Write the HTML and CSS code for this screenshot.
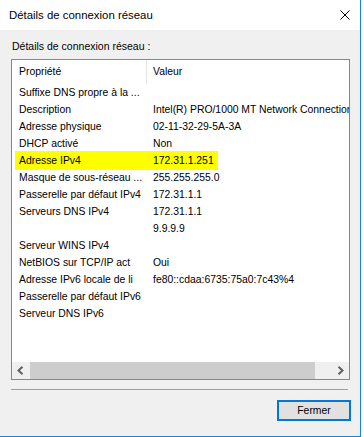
FILE: index.html
```html
<!DOCTYPE html>
<html lang="fr">
<head>
  <meta charset="UTF-8" />
  <meta name="viewport" content="width=device-width, initial-scale=1" />
  <title>Détails de connexion réseau</title>
  <link rel="stylesheet" href="styles.css">
</head>
<body>

  <div class="window">
    <div class="titlebar">
      <span class="title">Détails de connexion réseau</span>
      <svg class="close" width="10" height="10" viewBox="0 0 10 10">
        <path d="M0.5 0.5L9.5 9.5M9.5 0.5L0.5 9.5" stroke="#000" stroke-width="1" fill="none"/>
      </svg>
    </div>

    <div class="content">
      <div class="group-label">Détails de connexion réseau :</div>

      <!-- liste des propriétés -->
      <div class="listview">
        <div class="lv-header">
          <div class="col-name">Propriété</div>
          <div class="col-value">Valeur</div>
        </div>

        <div class="lv-body">
          <div class="row"><div class="col-name">Suffixe DNS propre à la ...</div><div class="col-value"></div></div>
          <div class="row"><div class="col-name">Description</div><div class="col-value">Intel(R) PRO/1000 MT Network Connection</div></div>
          <div class="row"><div class="col-name">Adresse physique</div><div class="col-value">02-11-32-29-5A-3A</div></div>
          <div class="row"><div class="col-name">DHCP activé</div><div class="col-value">Non</div></div>
          <div class="row marked"><div class="col-name">Adresse IPv4</div><div class="col-value">172.31.1.251</div></div>
          <div class="row"><div class="col-name">Masque de sous-réseau ...</div><div class="col-value">255.255.255.0</div></div>
          <div class="row"><div class="col-name">Passerelle par défaut IPv4</div><div class="col-value">172.31.1.1</div></div>
          <div class="row"><div class="col-name">Serveurs DNS IPv4</div><div class="col-value">172.31.1.1</div></div>
          <div class="row"><div class="col-name"></div><div class="col-value">9.9.9.9</div></div>
          <div class="row"><div class="col-name">Serveur WINS IPv4</div><div class="col-value"></div></div>
          <div class="row"><div class="col-name">NetBIOS sur TCP/IP act</div><div class="col-value">Oui</div></div>
          <div class="row"><div class="col-name">Adresse IPv6 locale de li</div><div class="col-value">fe80::cdaa:6735:75a0:7c43%4</div></div>
          <div class="row"><div class="col-name">Passerelle par défaut IPv6</div><div class="col-value"></div></div>
          <div class="row"><div class="col-name">Serveur DNS IPv6</div><div class="col-value"></div></div>
        </div>

        <div class="hscroll">
          <div class="sb-arrow">
            <svg width="7" height="9" viewBox="0 0 7 9"><path d="M5.5 0.8L1.5 4.5L5.5 8.2" stroke="#606060" stroke-width="2" fill="none"/></svg>
          </div>
          <div class="sb-track"><div class="sb-thumb"></div></div>
          <div class="sb-arrow">
            <svg width="7" height="9" viewBox="0 0 7 9"><path d="M1.5 0.8L5.5 4.5L1.5 8.2" stroke="#606060" stroke-width="2" fill="none"/></svg>
          </div>
        </div>
      </div>

      <div class="separator"></div>

      <div class="actions">
        <button class="btn">Fermer</button>
      </div>
    </div>
  </div>

</body>
</html>
```

FILE: styles.css
```css
* {
  box-sizing: border-box;
  margin: 0;
  padding: 0;
}

body {
  font-family: "Liberation Sans", Arial, sans-serif;
  font-size: 10.4px;
  color: #000;
  background: #fff;
}

.window {
  width: 361px;
  height: 437px;
  display: flex;
  flex-direction: column;
  background: #f0f0f0;
  border-right: 1px solid #1883d7;
  border-bottom: 1px solid #1883d7;
}

.titlebar {
  height: 30px;
  background: #fff;
  display: flex;
  align-items: center;
  padding-left: 9px;
}

.title {
  font-size: 11.4px;
}

.close {
  margin-left: auto;
  margin-right: 10px;
}

.content {
  flex: 1;
  padding: 8px 9px 0 11px;
}

.group-label {
  height: 16px;
  line-height: 16px;
  padding-left: 1px;
  margin-bottom: 5px;
  font-size: 10.5px;
}

.listview {
  width: 339px;
  height: 321px;
  border: 1px solid #828790;
  background: #fff;
  display: flex;
  flex-direction: column;
  overflow: hidden;
}

.lv-header {
  height: 24px;
  line-height: 24px;
  display: flex;
}

.lv-header .col-name {
  border-right: 1px solid #e5e5e5;
}

.col-name {
  width: 135px;
  flex-shrink: 0;
  padding-left: 7px;
  white-space: nowrap;
  overflow: hidden;
}

.col-value {
  flex: 1;
  padding-left: 6px;
  white-space: nowrap;
  overflow: hidden;
}

.lv-body {
  flex: 1;
}

.row {
  height: 17px;
  line-height: 17px;
  display: flex;
}

/* surlignage au feutre */
.row.marked {
  position: relative;
}

.row.marked::before {
  content: "";
  position: absolute;
  left: 3px;
  top: -1px;
  width: 203px;
  height: 19px;
  background: #ffff00;
}

.row.marked .col-name,
.row.marked .col-value {
  position: relative;
}

.hscroll {
  height: 17px;
  display: flex;
  background: #f0f0f0;
}

.sb-arrow {
  width: 17px;
  display: flex;
  align-items: center;
  justify-content: center;
}

.sb-track {
  flex: 1;
  padding-left: 1px;
}

.sb-thumb {
  width: 285px;
  height: 100%;
  background: #cdcdcd;
}

.separator {
  width: 337px;
  height: 1px;
  background: #a0a0a0;
  margin-top: 9px;
}

.actions {
  display: flex;
  justify-content: flex-end;
  margin-top: 10px;
}

.btn {
  width: 74px;
  height: 21px;
  border: 2px solid #0078d7;
  background: #e1e1e1;
  font-family: inherit;
  font-size: 10.4px;
  color: #000;
}
```
